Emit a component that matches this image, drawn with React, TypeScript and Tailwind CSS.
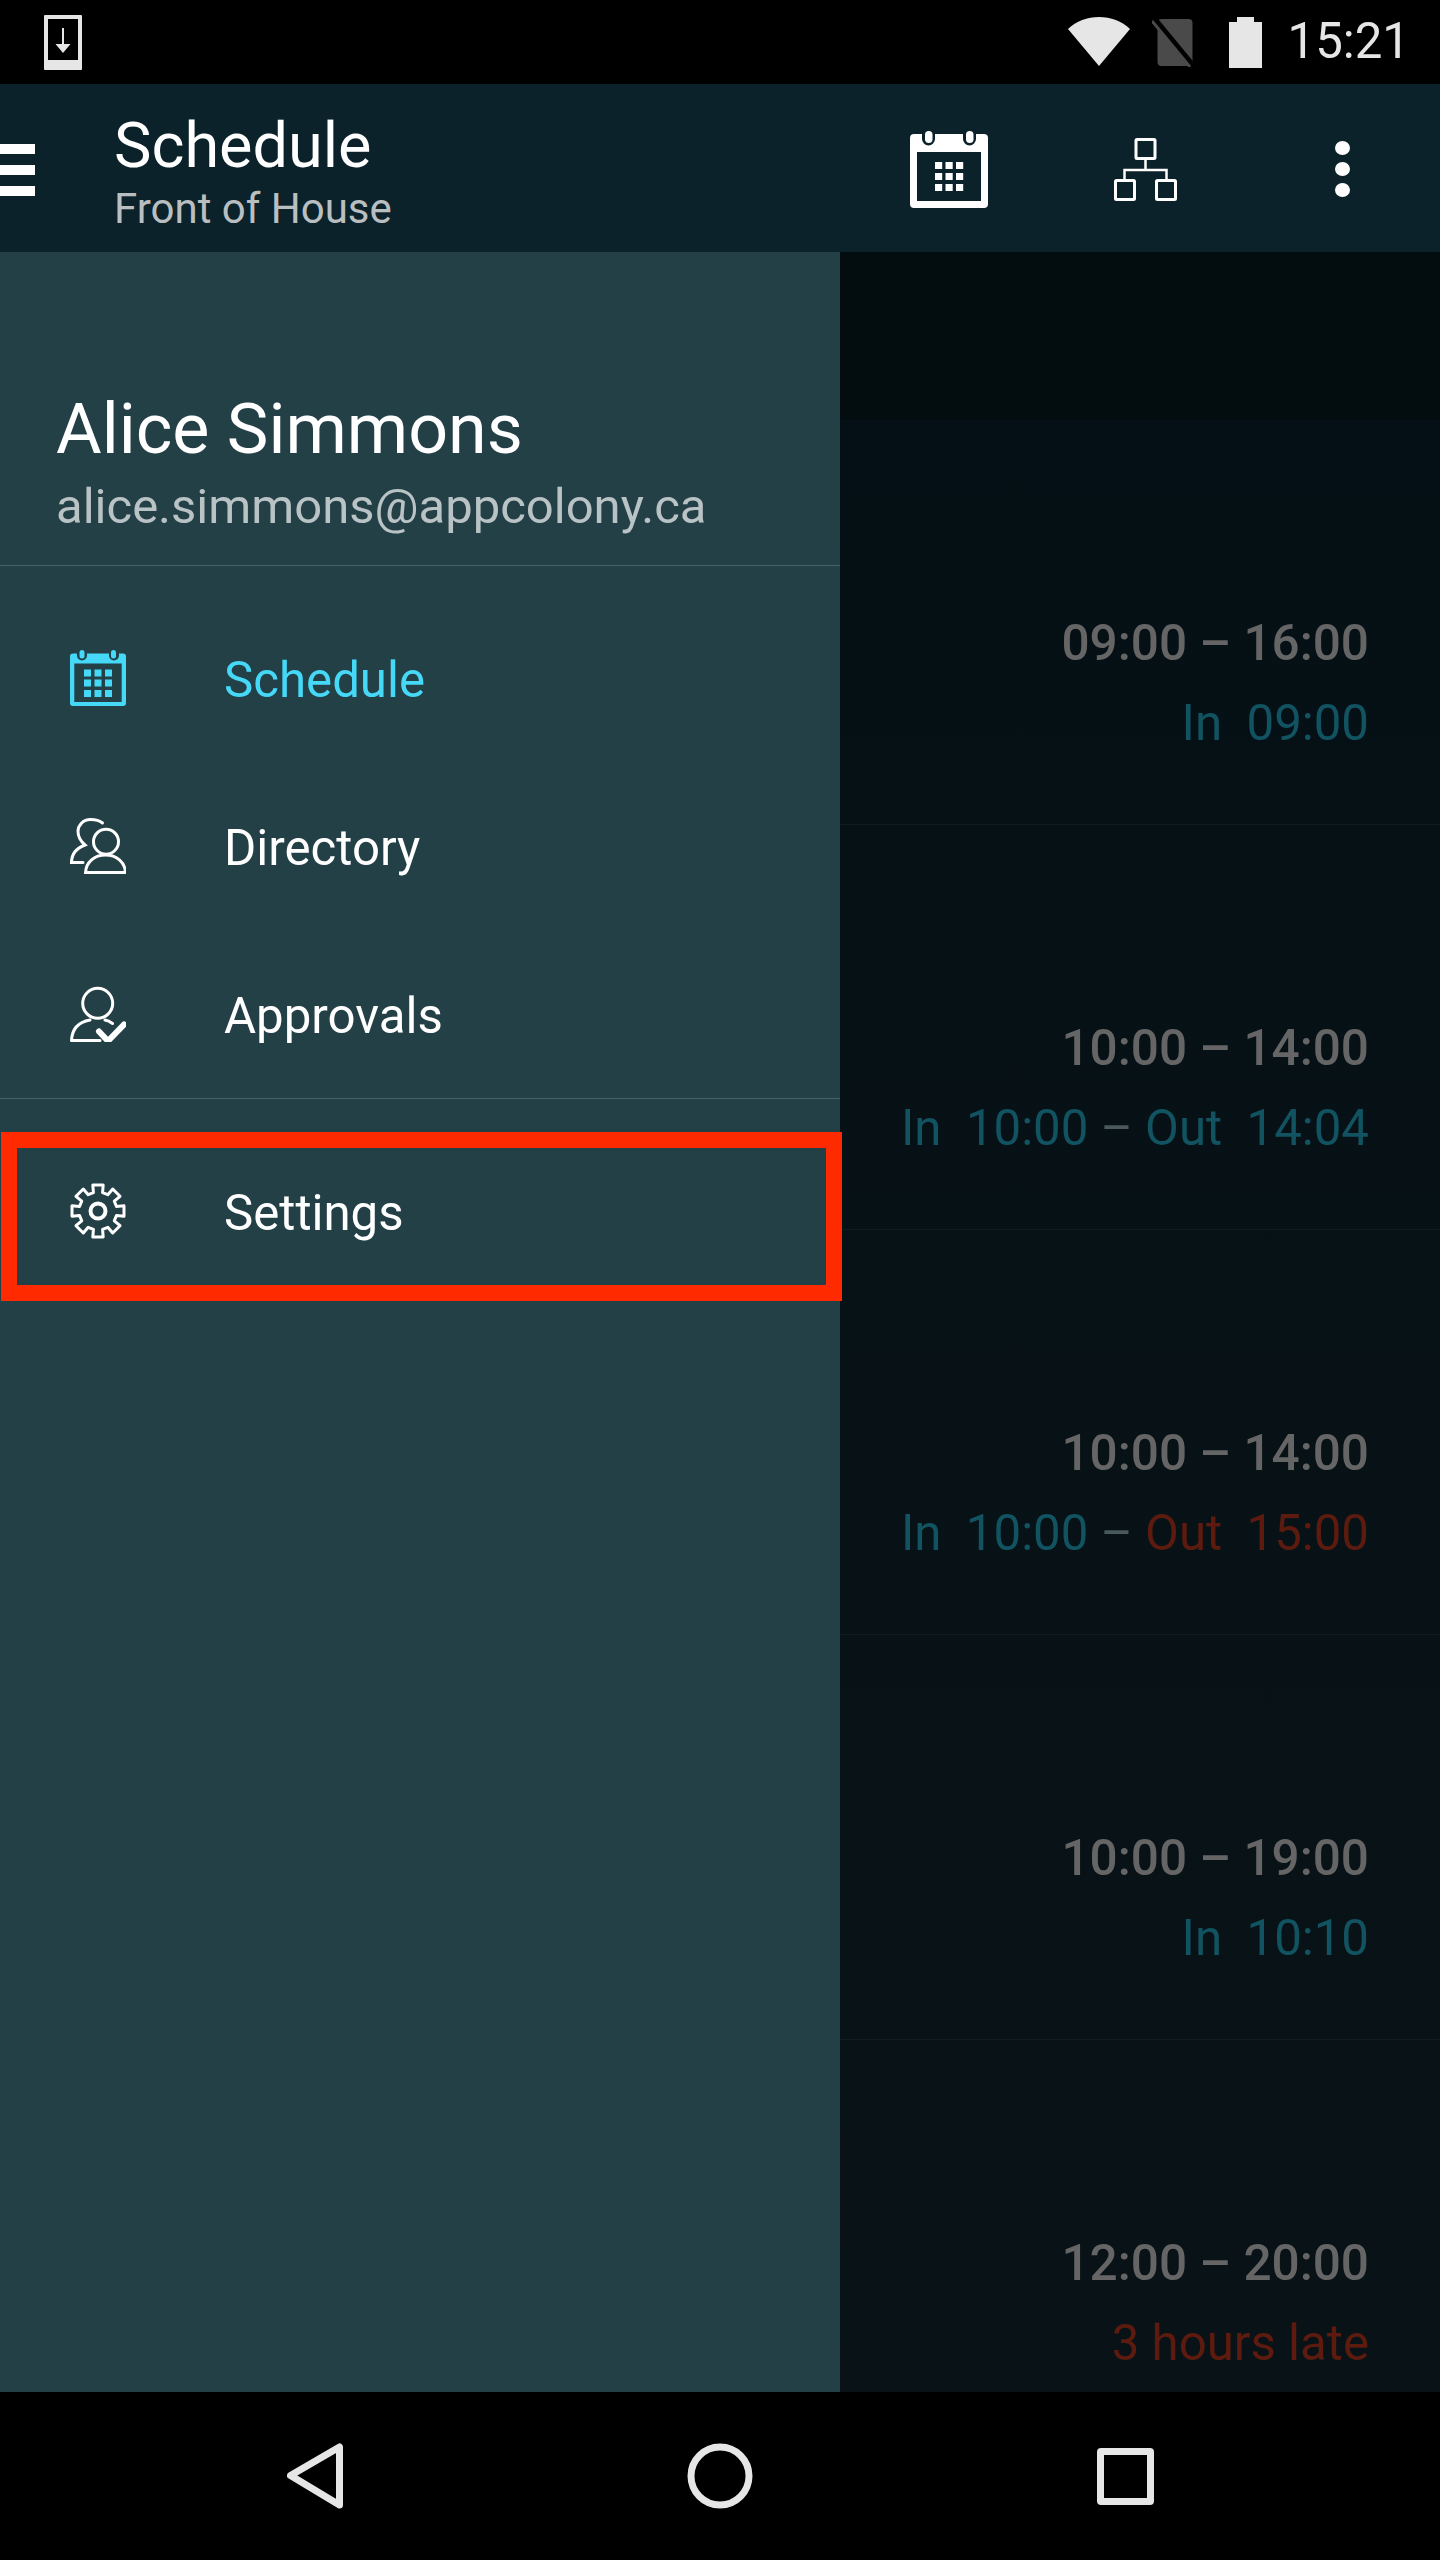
import React from 'react';

const font = "font-['Roboto',sans-serif]";

const BarCalendarIcon = () => (
  <svg viewBox="0 0 78 77" className="w-[78px] h-[77px] text-white" fill="none">
    <path
      fill="currentColor"
      fillRule="evenodd"
      d="M4 3h8v5a6.500 6.500 0 0 0 13 0V3h28v5a6.500 6.500 0 0 0 13 0V3h8a4 4 0 0 1 4 4v66a4 4 0 0 1-4 4H4a4 4 0 0 1-4-4V7a4 4 0 0 1 4-4zM7 21v49h64V21z"
    />
    <rect x="15" y="0" width="7.500" height="12" rx="3.750" fill="currentColor" />
    <rect x="56" y="0" width="7.500" height="12" rx="3.750" fill="currentColor" />
    {[31, 42, 53].map((y) =>
      [25, 35.500, 46].map((x) => <rect key={`${x}-${y}`} x={x} y={y} width="7.200" height="7" fill="currentColor" />)
    )}
  </svg>
);

const DrawerCalendarIcon = () => (
  <svg viewBox="0 0 56 56" className="w-[56px] h-[56px]" fill="none">
    <path
      fill="currentColor"
      fillRule="evenodd"
      d="M3 3.500h4v2a5 5 0 0 0 10 0v-2h22v2a5 5 0 0 0 10 0v-2h4a3 3 0 0 1 3 3V53a3 3 0 0 1-3 3H3a3 3 0 0 1-3-3V6.500a3 3 0 0 1 3-3zM4.300 13.500V52h47.400V13.500z"
    />
    <rect x="9.500" y="0" width="5" height="8.500" rx="2.500" fill="currentColor" />
    <rect x="41" y="0" width="5" height="8.500" rx="2.500" fill="currentColor" />
    {[19.500, 29.500, 40].map((y) =>
      [14, 24.500, 35].map((x) => <rect key={`${x}-${y}`} x={x} y={y} width="7" height="7" fill="currentColor" />)
    )}
  </svg>
);

const OrgIcon = () => (
  <svg viewBox="0 0 63 63" className="w-[63px] h-[63px] text-white" fill="none" stroke="currentColor" strokeWidth="3">
    <rect x="22" y="1.500" width="19" height="19" rx="1" />
    <path d="M31.500 21v11M10.500 42V32h42v10" strokeWidth="2.500" />
    <rect x="1.500" y="42.500" width="19" height="19" rx="1" />
    <rect x="42.500" y="42.500" width="19" height="19" rx="1" />
  </svg>
);

const DirectoryIcon = () => (
  <svg viewBox="0 0 56 56" className="w-[56px] h-[56px] text-white" fill="none" stroke="currentColor" strokeWidth="3">
    <path d="M32.500 5C29 2 25 1.500 20.500 1.500 13 1.500 8 7.500 8 13.500c0 5 3 10 7 13.500C7 30 1.500 36 1.500 44.500H13" strokeLinecap="round" />
    <circle cx="36" cy="23.700" r="12.500" />
    <path d="M15.500 54.500C16 44 24.500 37 35.500 37s19.500 7 20 17.500z" />
  </svg>
);

const ApprovalsIcon = () => (
  <svg viewBox="0 0 56 56" className="w-[56px] h-[56px] text-white" fill="none" stroke="currentColor" strokeWidth="3">
    <circle cx="27.700" cy="17.300" r="15" />
    <path d="M1.500 54.500C2 43 9 36 20 34M35 34c3 .5 5.500 2 7.500 3.500M1.500 54.500H30" strokeLinecap="round" />
    <path d="M29 45.500l9 9.500L54 38.500" strokeWidth="6" strokeLinecap="round" strokeLinejoin="round" />
  </svg>
);

const GearIcon = () => {
  const teeth = 8;
  const pts: string[] = [];
  for (let i = 0; i < teeth; i++) {
    const a = (i / teeth) * Math.PI * 2 - Math.PI / 2;
    const step = Math.PI / teeth;
    const p = (ang: number, rad: number) => `${(28 + Math.cos(ang) * rad).toFixed(2)} ${(28 + Math.sin(ang) * rad).toFixed(2)}`;
    pts.push(p(a - step * 0.5, 26.5), p(a + step * 0.5, 26.5), p(a + step * 0.62, 19), p(a + step * 1.38, 19));
  }
  return (
    <svg viewBox="0 0 56 56" className="w-[56px] h-[56px] text-white" fill="none" stroke="currentColor" strokeWidth="3" strokeLinejoin="round">
      <path d={`M${pts.join('L')}z`} />
      <circle cx="28" cy="28" r="7.500" strokeWidth="4" />
    </svg>
  );
};

interface DrawerItemProps {
  icon: React.ReactNode;
  label: string;
  active?: boolean;
}

const DrawerItem: React.FC<DrawerItemProps> = ({ icon, label, active }) => (
  <div className={`flex items-center h-[168px] ${active ? 'text-[#45d8f7]' : 'text-white'}`}>
    <div className="w-[224px] pl-[70px] flex items-center">{icon}</div>
    <span className="text-[49.2px] leading-none mt-[5px]">{label}</span>
  </div>
);

const shifts = [
  { time: '09:00 – 16:00', status: <span className="text-[#115361]">In&nbsp; 09:00</span> },
  { time: '10:00 – 14:00', status: <span className="text-[#115361]">In&nbsp; 10:00 <span className="text-[#4a5a5c]">–</span> Out&nbsp; 14:04</span> },
  { time: '10:00 – 14:00', status: <span className="text-[#115361]">In&nbsp; 10:00 <span className="text-[#4a5a5c]">–</span> <span className="text-[#5c1b0e]">Out&nbsp; 15:00</span></span> },
  { time: '10:00 – 19:00', status: <span className="text-[#115361]">In&nbsp; 10:10</span> },
  { time: '12:00 – 20:00', status: <span className="text-[#5c1b0e]">3 hours late</span> },
];

export default function App() {
  return (
    <div className={`w-[1440px] h-[2560px] flex flex-col bg-black overflow-hidden ${font}`}>
      {/* status bar */}
      <div className="h-[84px] shrink-0 flex items-center text-[#e6e6e6]">
        <svg viewBox="0 0 38 55" className="ml-[44px] w-[38px] h-[55px]">
          <path fill="currentColor" fillRule="evenodd" d="M1 0h36a1 1 0 0 1 1 1v53a1 1 0 0 1-1 1H1a1 1 0 0 1-1-1V1a1 1 0 0 1 1-1zM4 4v41h30V4z" />
          <path d="M19 13v17" stroke="currentColor" strokeWidth="2" />
          <path d="M11.500 29h15L19 38z" fill="currentColor" />
        </svg>
        <div className="flex-1" />
        <svg viewBox="0 0 62 50" className="w-[62px] h-[50px]">
          <path fill="currentColor" d="M0 12C16-4 46-4 62 12L31 49z" />
        </svg>
        <svg viewBox="0 0 45 50" className="ml-[22px] w-[45px] h-[50px]">
          <rect x="5.500" y="2" width="35" height="47" rx="4" fill="#4a4a4a" />
          <path d="M3 3l38 46" stroke="#000" strokeWidth="6" />
          <path d="M0 4l38 46" stroke="#4a4a4a" strokeWidth="3" />
        </svg>
        <svg viewBox="0 0 33 51" className="ml-[32px] w-[33px] h-[51px]">
          <path fill="currentColor" d="M8 0h17v5h8v46H0V5h8z" />
        </svg>
        <span className="ml-[26px] mr-[30px] text-[49.2px] leading-none">15:21</span>
      </div>

      {/* app bar */}
      <div className="h-[168px] shrink-0 flex items-center bg-[#0b222a] text-white">
        <div className="w-[35px] flex flex-col gap-[11px] mt-[4px]">
          <div className="h-[10px] bg-white" />
          <div className="h-[10px] bg-white" />
          <div className="h-[10px] bg-white" />
        </div>
        <div className="ml-[79px] flex-1 mt-[12px]">
          <div className="text-[63px] leading-[70px]">Schedule</div>
          <div className="text-[42px] leading-[56px] text-[#b9bfc1]">Front of House</div>
        </div>
        <div className="flex items-center mt-[2px]">
          <BarCalendarIcon />
          <div className="ml-[126px]">
            <OrgIcon />
          </div>
          <svg viewBox="0 0 15 56" className="ml-[158px] mr-[90px] w-[15px] h-[56px]">
            <ellipse cx="7.500" cy="7" rx="7.500" ry="7" fill="#fff" />
            <ellipse cx="7.500" cy="28" rx="7.500" ry="7" fill="#fff" />
            <ellipse cx="7.500" cy="49" rx="7.500" ry="7" fill="#fff" />
          </svg>
        </div>
      </div>

      <div className="flex-1 flex min-h-0">
        {/* drawer */}
        <div className="w-[840px] shrink-0 bg-[#244047] flex flex-col">
          <div className="h-[314px] shrink-0 border-b border-[#4a6169] flex flex-col justify-end px-[56px] pb-[25px]">
            <div className="text-[70px] leading-[84px] text-white mb-[3px]">Alice Simmons</div>
            <div className="text-[49px] leading-[66px] text-[#b9c2c5]">alice.simmons@appcolony.ca</div>
          </div>
          <div className="pt-[28px] border-b border-[#4a6169]">
            <DrawerItem active label="Schedule" icon={<DrawerCalendarIcon />} />
            <DrawerItem label="Directory" icon={<DirectoryIcon />} />
            <DrawerItem label="Approvals" icon={<ApprovalsIcon />} />
          </div>
          <div className="pt-[28px] relative">
            <DrawerItem label="Settings" icon={<GearIcon />} />
            <div className="absolute left-[1px] top-[33px] w-[841px] h-[169px] border-[16px] border-[#ff2a00]" />
          </div>
        </div>

        {/* schedule dimmed behind the drawer */}
        <div className="flex-1 bg-linear-to-b from-[#051016] to-[#091317] flex flex-col leading-none">
          <div className="h-[168px] shrink-0 bg-[#030c0f]" />
          {shifts.map((s, i) => (
            <div key={i} className="h-[405px] shrink-0 border-b border-[#0f1c20] flex flex-col items-end gap-[30px] pt-[199px] pr-[71px]">
              <div className="text-[49.5px] text-[#656565] font-medium whitespace-nowrap">{s.time}</div>
              <div className="text-[49.2px] whitespace-nowrap">{s.status}</div>
            </div>
          ))}
        </div>
      </div>

      {/* nav bar */}
      <div className="h-[168px] shrink-0 grid grid-cols-[403px_403px_403px] justify-center items-center bg-black">
        <svg viewBox="0 0 60 66" className="justify-self-center w-[60px] h-[66px]" fill="none" stroke="#e6e6e6" strokeWidth="7" strokeLinejoin="round">
          <path d="M3.500 32.500L52.500 4v58z" />
        </svg>
        <svg viewBox="0 0 66 66" className="justify-self-center w-[66px] h-[66px]" fill="none" stroke="#e6e6e6" strokeWidth="7">
          <circle cx="33" cy="33" r="29" />
        </svg>
        <div className="justify-self-center w-[57px] h-[57px] border-[7px] border-[#e6e6e6] rounded-[4px] ml-[4px]" />
      </div>
    </div>
  );
}
